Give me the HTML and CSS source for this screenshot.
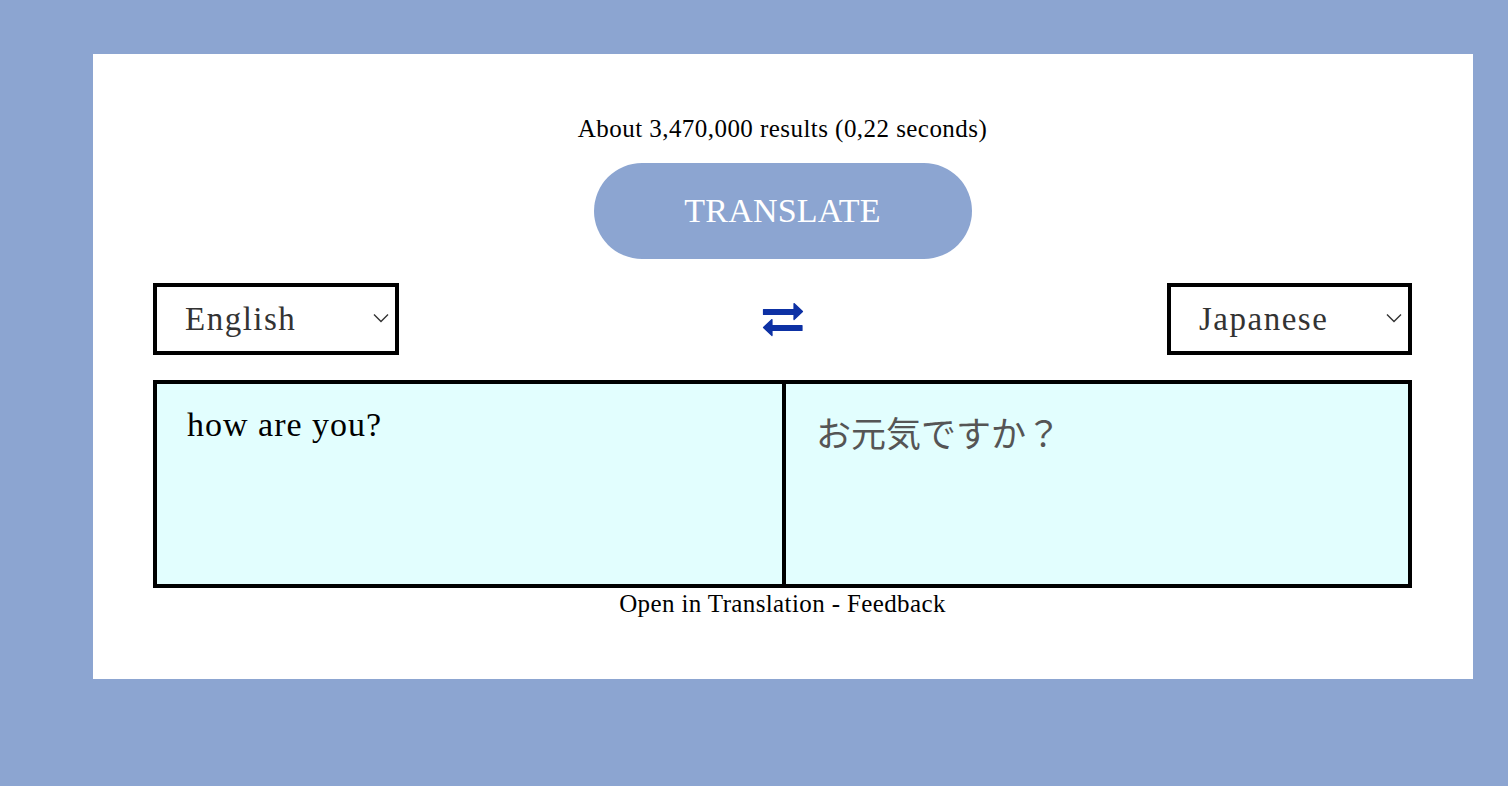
FILE: index.html
```html
<!DOCTYPE html>
<html lang="en">
<head>
<meta charset="utf-8">
<title>Translate</title>
<link rel="stylesheet" href="styles.css">
</head>
<body>
<main class="card">
  <p class="stats">About 3,470,000 results (0,22 seconds)</p>
  <button class="translate-btn" type="button">TRANSLATE</button>
  <div class="lang-row">
    <div class="lang-select">
      <span class="lang-name">English</span>
      <svg class="chevron" viewBox="0 0 16 10" width="16" height="10"><path d="M1 1.5l7 7 7-7" fill="none" stroke="#333" stroke-width="1.4"/></svg>
    </div>
    <svg class="swap" viewBox="0 0 42 35" width="42" height="35"><g fill="#0d31a4" stroke="#0d31a4" stroke-width="1.2" stroke-linejoin="round"><path d="M1.5 7.5H32V1.5L40.5 9.5L32 17.5V12.5H1.5Z"/><path d="M40 23.5H10V17.5L1.5 25.5L10 33.5V28.5H40Z"/></g></svg>
    <div class="lang-select">
      <span class="lang-name">Japanese</span>
      <svg class="chevron" viewBox="0 0 16 10" width="16" height="10"><path d="M1 1.5l7 7 7-7" fill="none" stroke="#333" stroke-width="1.4"/></svg>
    </div>
  </div>
  <div class="panels">
    <div class="panel source">how are you?</div>
    <div class="panel target">お元気ですか？</div>
  </div>
  <p class="footer-links">Open in Translation - Feedback</p>
</main>
</body>
</html>
```
FILE: styles.css
```css
html, body {
  margin: 0;
  padding: 0;
}
body {
  background: #8ca5d1;
  font-family: "Liberation Serif", "Times New Roman", serif;
  color: #000;
  min-height: 786px;
  padding-top: 54px;
  box-sizing: border-box;
}
.card {
  margin-left: 93px;
  width: 1380px;
  height: 625px;
  background: #fff;
  box-sizing: border-box;
  padding: 0 61px 0 60px;
  display: flex;
  flex-direction: column;
  align-items: center;
}
.stats {
  margin: 61px 0 0;
  font-size: 25px;
  letter-spacing: 0.45px;
  line-height: 28px;
}
.translate-btn {
  margin-top: 20px;
  width: 378px;
  height: 96px;
  border: none;
  border-radius: 48px;
  background: #8ca5d1;
  color: #fff;
  font-family: "Liberation Serif", "Times New Roman", serif;
  font-size: 34px;
  letter-spacing: 0.2px;
  padding: 0;
}
.lang-row {
  margin-top: 24px;
  width: 100%;
  display: flex;
  justify-content: space-between;
  align-items: center;
}
.lang-select {
  width: 246px;
  height: 72px;
  box-sizing: border-box;
  border: 4px solid #000;
  display: flex;
  align-items: center;
  justify-content: space-between;
  padding: 0 6px 0 28px;
  color: #333;
  font-size: 33px;
  letter-spacing: 1.5px;
}
.lang-row .lang-select:last-child {
  width: 245px;
}
.chevron {
  width: 16px;
  height: 10px;
  margin-bottom: 2px;
}
.swap {
  display: block;
  margin-top: 1px;
}
.panels {
  margin-top: 25px;
  width: 100%;
  height: 208px;
  box-sizing: border-box;
  border: 4px solid #000;
  background: #e2fefe;
  display: grid;
  grid-template-columns: 629px 1fr;
}
.panel {
  padding: 22px 30px;
  font-size: 34px;
  letter-spacing: 1px;
  line-height: 38px;
}
.source {
  border-right: 4px solid #000;
}
.target {
  font-family: "Noto Sans CJK JP", sans-serif;
  color: #555;
  padding: 25px 30px;
  font-size: 35px;
  letter-spacing: 0;
  line-height: 45px;
}
.footer-links {
  margin: 1px 0 0;
  font-size: 25px;
  letter-spacing: 0.38px;
  line-height: 30px;
}
```
